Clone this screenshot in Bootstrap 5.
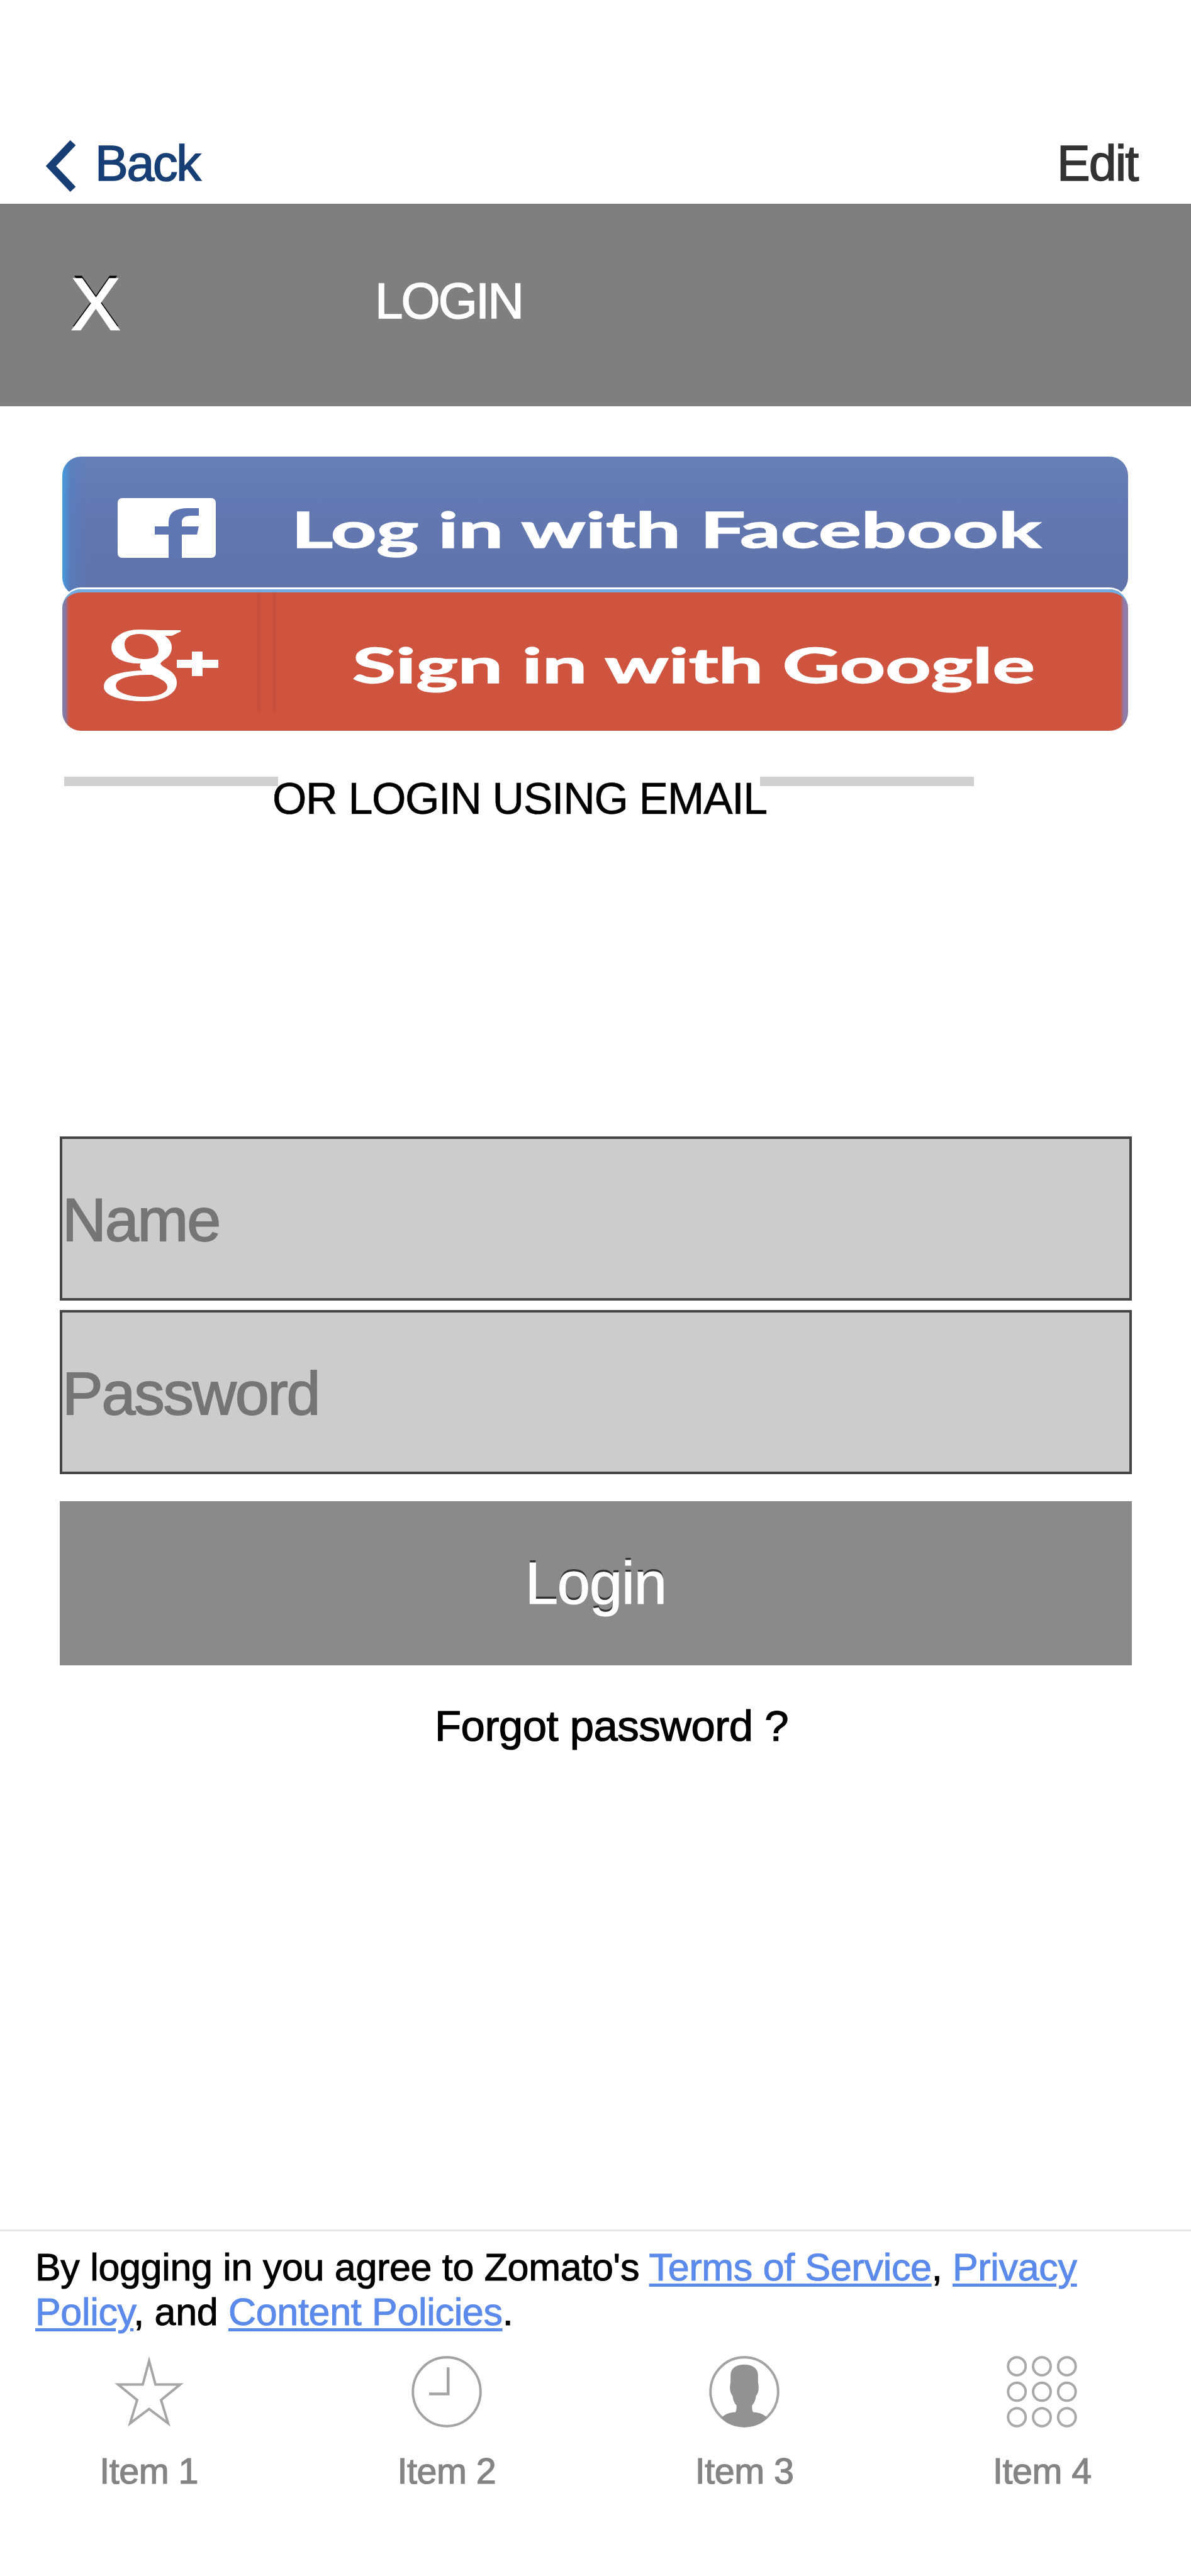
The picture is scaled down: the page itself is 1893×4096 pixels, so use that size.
<!DOCTYPE html>
<html lang="en">
<head>
<meta charset="utf-8">
<meta name="viewport" content="width=device-width, initial-scale=1">
<title>Login</title>
<link href="https://cdn.jsdelivr.net/npm/bootstrap@5.3.0/dist/css/bootstrap.min.css" rel="stylesheet">
<style>
body{font-family:"Liberation Sans",Arial,sans-serif;color:#000;background:#fff;line-height:1}
.screen{width:1893px;height:4096px;overflow:hidden}
.topnav{height:324px;padding:220px 0 0 73px;font-size:79px;-webkit-text-stroke:1.6px currentColor}
.topnav a{line-height:1;white-space:nowrap}
.back-link{color:#173f75;letter-spacing:-2.3px}
.back-link svg{width:48px;height:82px;margin:3px 30px 0 0}
.edit-link{color:#333;width:213px;letter-spacing:-2px}
.title-bar{height:322px;background:#7f7f7f;color:#fff;padding-left:113px}
.close-x{font-size:117px;line-height:1;width:483px;padding-top:101px;text-shadow:0 -5px 0 #000;-webkit-text-stroke:2.5px #fff}
.title-text{font-size:80px;line-height:1;letter-spacing:-3px;padding-top:115px;-webkit-text-stroke:1.5px #fff}
.socials{padding:80px 0 0 99px;width:1793px}
.social-btn{width:1694px;border-radius:30px;overflow:hidden;display:block}
.social-fb{background:linear-gradient(90deg,#459bdd 0,rgba(80,130,200,.5) 13px,transparent 40px),linear-gradient(#6680b7,#6378b2 35%,#6073aa);height:222px}
.social-gp{margin-top:-11px;height:225px;border-top:5px solid #72abdd;background:linear-gradient(90deg,#7e7ba9 0,#7e7ba9 4px,#ce5440 11px,#ce5440 1682px,#8f7aa8 1687px);position:relative;box-shadow:0 -3px 0 #fff}
.social-btn svg{display:block}
.divider{padding:73px 0 0 102px;height:645px}
.rule-bar{width:340px;height:15px;background:#d0d0d0}
.divider-text{width:766px;font-size:70px;letter-spacing:-1.35px;white-space:nowrap;text-indent:-9px;line-height:70px;-webkit-text-stroke:.6px #000}
.login-form{padding:0 94.5px 0 95px}
.login-form .form-control{height:261px;border:4.5px solid #454545;border-radius:0;background:#ccc;padding:4px 0 0 0;font-size:97px;line-height:1.2;color:#757575}
.login-form .form-control::placeholder{color:#757575;opacity:1;letter-spacing:-2.2px;-webkit-text-stroke:1.8px #757575}
.login-btn{height:261px;border:0;border-radius:0;background:#8b898b;color:#fff;font-size:94px;letter-spacing:-1.2px;line-height:1;text-shadow:0 -4px 0 #333;margin-top:43px;-webkit-text-stroke:1.2px #fff}
.login-btn:hover{background:#8b898b;color:#fff}
.forgot{font-size:69px;letter-spacing:-.55px;padding:62px 0 0 51px;height:897px;color:#000;-webkit-text-stroke:1.2px #000}
.tabs-foot{border-top:3px solid #e6e6e6;height:551px}
.terms{font-size:61px;line-height:70.7px;letter-spacing:-.32px;padding:22px 120px 0 56px;height:198px;margin:0;-webkit-text-stroke:1px currentColor}
.terms a{color:#5b8aeb;text-decoration-thickness:5px;text-underline-offset:5px}
.tab-item{color:#848484;font-size:57.5px;letter-spacing:-.5px;-webkit-text-stroke:1.2px #848484}
.tab-item svg{width:112px;height:114px;margin-bottom:41px}
</style>
</head>
<body>
<main class="screen d-flex flex-column">
  <nav class="topnav d-flex justify-content-between align-items-start flex-shrink-0">
    <a href="#" class="back-link d-flex align-items-start text-decoration-none">
      <svg viewBox="0 0 48 82"><path d="M43 4 8 41 43 78" fill="none" stroke="#173f75" stroke-width="12"/></svg>Back</a>
    <a href="#" class="edit-link text-decoration-none">Edit</a>
  </nav>
  <header class="title-bar d-flex align-items-start flex-shrink-0">
    <span class="close-x">X</span>
    <span class="title-text">LOGIN</span>
  </header>
  <section class="socials flex-shrink-0">
    <a href="#" class="social-btn social-fb">
      <svg width="1694" height="222" viewBox="0 0 1694 222">
        <rect x="88" y="66" width="156" height="95" rx="7" fill="#fff"/>
        <path d="M169 161V124H147V111H169V104Q169 82 200 82H217V94H205Q190 94 190 104V111H217L214 124H190V161Z" fill="#5f76b5"/>
        <text x="364" y="145" font-family="Lato, sans-serif" font-weight="700" font-size="79" fill="#fff" stroke="#fff" stroke-width="1.5" textLength="1192" lengthAdjust="spacingAndGlyphs">Log in with Facebook</text>
      </svg>
    </a>
    <a href="#" class="social-btn social-gp">
      <svg width="1694" height="220" viewBox="0 0 1694 220">
        <path d="M312 0V190M337 0V190" stroke="#c24b39" stroke-width="5" opacity=".45"/>
        <g fill="#fff" fill-rule="evenodd">
          <path stroke="#fff" stroke-width="2" d="M122 60C139 60 143 61 154 61H188L174 68H160C170 75 173 80 173 88C173 103 157 107 155 113C155 121 181 123 181 144C181 160 160 172 129 172C96 172 67 164 67 150C67 134 91 126 130 125C124 121 123 118 126 112C97 113 79 102 79 88C79 72 98 60 122 60ZM123 65C107 65 98 72 98 82C98 97 111 107 130 107C146 107 154 101 154 92C154 77 140 65 123 65ZM136 130C104 130 84 137 84 148C84 160 104 167 130 167C153 167 168 160 168 151C168 140 154 136 143 130Z"/>
          <path d="M206 94H223V107H248V120H223V133H206V120H182V107H206Z"/>
        </g>
        <text x="461" y="144" font-family="Lato, sans-serif" font-weight="700" font-size="76" fill="#fff" stroke="#fff" stroke-width="1.5" textLength="1085" lengthAdjust="spacingAndGlyphs">Sign in with Google</text>
      </svg>
    </a>
  </section>
  <div class="divider d-flex align-items-start flex-shrink-0">
    <div class="rule-bar flex-shrink-0"></div>
    <div class="divider-text flex-shrink-0">OR LOGIN USING EMAIL</div>
    <div class="rule-bar flex-shrink-0"></div>
  </div>
  <form class="login-form flex-shrink-0">
    <input type="text" class="form-control" placeholder="Name" aria-label="Name">
    <input type="password" class="form-control" placeholder="Password" aria-label="Password" style="margin-top:15px">
    <button type="button" class="btn login-btn w-100 d-block">Login</button>
  </form>
  <div class="forgot text-center flex-shrink-0">Forgot password ?</div>
  <footer class="tabs-foot flex-shrink-0">
    <p class="terms">By logging in you agree to Zomato's <a href="#">Terms of Service</a>, <a href="#">Privacy Policy</a>, and <a href="#">Content Policies</a>.</p>
    <div class="row g-0">
      <div class="col-3 tab-item d-flex flex-column align-items-center">
        <svg viewBox="0 0 100 100" preserveAspectRatio="none"><path d="M50 7 59 40H94L67 61.500 77 94 50 74 23 94 33 61.500 6 40H41Z" fill="none" stroke="#a6a6a6" stroke-width="3.500" stroke-miterlimit="10"/></svg>
        <span>Item 1</span>
      </div>
      <div class="col-3 tab-item d-flex flex-column align-items-center">
        <svg viewBox="0 0 100 100" preserveAspectRatio="none"><circle cx="50" cy="50" r="48" fill="none" stroke="#a3a3a3" stroke-width="3.500"/><path d="M52 16V53H25" fill="none" stroke="#a3a3a3" stroke-width="4"/></svg>
        <span>Item 2</span>
      </div>
      <div class="col-3 tab-item d-flex flex-column align-items-center">
        <svg viewBox="0 0 100 100" preserveAspectRatio="none"><circle cx="50" cy="50" r="48" fill="none" stroke="#a3a3a3" stroke-width="3.500"/><path d="M50 12C61 12 69.500 17 69.500 27V37C71 44 71 51 66.500 56C66 62 64 66 61 69C61 73 61 76 62.500 78.500C71 79 78 81 82.500 86.500C75 95 63 99.500 50 99.500S25 95 17.500 86.500C22 81 29 79 37.500 78.500C39 76 39 73 39 69C36 66 34 62 33.500 56C29 51 29 44 30.500 37V27C30.500 17 39 12 50 12Z" fill="#929292"/></svg>
        <span>Item 3</span>
      </div>
      <div class="col-3 tab-item d-flex flex-column align-items-center">
        <svg viewBox="0 0 100 100" preserveAspectRatio="none"><g fill="none" stroke="#a8a8a8" stroke-width="3.500"><circle cx="14.500" cy="14.500" r="12.500"/><circle cx="50" cy="14.500" r="12.500"/><circle cx="85.500" cy="14.500" r="12.500"/><circle cx="14.500" cy="50" r="12.500"/><circle cx="50" cy="50" r="12.500"/><circle cx="85.500" cy="50" r="12.500"/><circle cx="14.500" cy="85.500" r="12.500"/><circle cx="50" cy="85.500" r="12.500"/><circle cx="85.500" cy="85.500" r="12.500"/></g></svg>
        <span>Item 4</span>
      </div>
    </div>
  </footer>
</main>
<script src="https://cdn.jsdelivr.net/npm/bootstrap@5.3.0/dist/js/bootstrap.bundle.min.js"></script>
</body>
</html>
